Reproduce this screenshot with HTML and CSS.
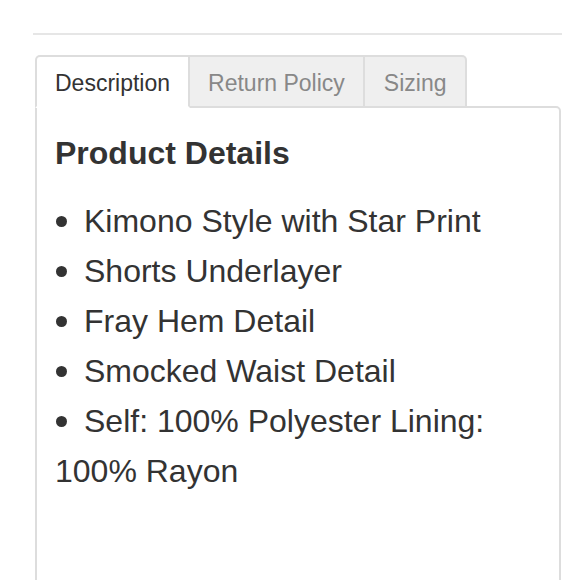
FILE: index.html
```html
<!DOCTYPE html>
<html>
<head>
<meta charset="utf-8">
<link rel="stylesheet" href="styles.css">
</head>
<body>
<div class="wrap">
  <hr class="rule">
  <div class="tabs">
    <div class="tab active">Description</div>
    <div class="tab">Return Policy</div>
    <div class="tab">Sizing</div>
  </div>
  <div class="panel">
    <h2 class="heading">Product Details</h2>
    <ul class="list">
      <li>Kimono Style with Star Print</li>
      <li>Shorts Underlayer</li>
      <li>Fray Hem Detail</li>
      <li>Smocked Waist Detail</li>
      <li>Self: 100% Polyester Lining: 100% Rayon</li>
    </ul>
  </div>
</div>
</body>
</html>
```
FILE: styles.css
```css
html, body {
  margin: 0;
  padding: 0;
  background: #fff;
}
body {
  font-family: "Liberation Sans", Arial, sans-serif;
  color: #333;
  overflow: hidden;
  height: 580px;
}
.wrap {
  padding: 33px 18px 0 33px;
}
.rule {
  margin: 0;
  border: 0;
  border-top: 2px solid #e6e6e6;
  height: 0;
}
.tabs {
  display: flex;
  margin: 20px 0 -2px 2px;
  position: relative;
  z-index: 1;
}
.tab {
  height: 49px;
  line-height: 52px;
  padding: 0 18px;
  font-size: 23px;
  color: #888;
  background: #efefef;
  border-top: 2px solid #ddd;
  border-right: 2px solid #ddd;
  border-bottom: 2px solid #ddd;
  overflow: hidden;
}
.tab:last-child {
  padding: 0 19px;
  border-top-right-radius: 5px;
}
.tab.active {
  color: #333;
  background: #fff;
  border-left: 2px solid #ddd;
  border-bottom-color: #fff;
  border-top-left-radius: 5px;
}
.panel {
  margin: 0 1px 0 2px;
  border: 2px solid #ddd;
  border-top-right-radius: 5px;
  padding: 25px 18px 0;
  min-height: 520px;
}
.heading {
  margin: 0 0 23px;
  font-size: 32px;
  line-height: 40px;
  font-weight: bold;
}
.list {
  margin: 0;
  padding: 0;
  list-style: none;
  font-size: 32px;
  line-height: 50px;
}
.list li::before {
  content: "";
  display: inline-block;
  width: 11px;
  height: 11px;
  border-radius: 50%;
  background: #333;
  margin: 0 17px 0 1px;
  vertical-align: 5px;
}
```
